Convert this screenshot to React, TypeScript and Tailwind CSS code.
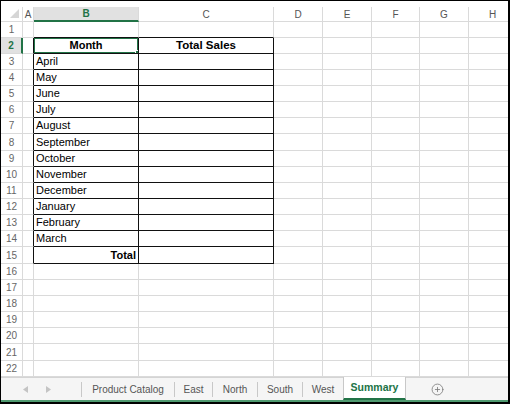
import React from 'react';
import { CirclePlus } from 'lucide-react';

const COLUMNS = ['A', 'B', 'C', 'D', 'E', 'F', 'G', 'H'];
const MONTHS = [
  'April', 'May', 'June', 'July', 'August', 'September',
  'October', 'November', 'December', 'January', 'February', 'March',
];
const SHEETS = [
  { name: 'Product Catalog', w: 'w-[92px]' },
  { name: 'East', w: 'w-[37px]' },
  { name: 'North', w: 'w-[44px]' },
  { name: 'South', w: 'w-[44px]' },
  { name: 'West', w: 'w-[40px]' },
];

// shared column template: row header, A..H
const ROW_GRID = 'grid grid-cols-[22px_11px_105px_135px_49px_49px_48px_49px_48px] w-max';
const CELL = 'border-r border-b border-[#dadada] flex items-center overflow-hidden whitespace-nowrap';
const INK = 'border-r-[#111111]';
const INK_B = 'border-b-[#111111]';

const ColumnHeaders: React.FC = () => (
  <div className={`${ROW_GRID} h-[15px]`}>
    <div className={`${CELL} relative`}>
      <svg className="absolute right-[3px] bottom-[3px]" width="9" height="9" viewBox="0 0 9 9">
        <polygon points="9,0 9,9 0,9" fill="#d6d6d6" />
      </svg>
    </div>
    {COLUMNS.map((c) =>
      c === 'B' ? (
        <div key={c} className={`${CELL} justify-center bg-[#e1e1e1] border-b-2 border-b-[#217346] text-[10px] font-bold text-[#217346]`}>
          {c}
        </div>
      ) : (
        <div key={c} className={`${CELL} justify-center text-[10px] text-[#555]`}>
          {c}
        </div>
      )
    )}
  </div>
);

const SheetRow: React.FC<{ r: number }> = ({ r }) => {
  const inTable = r >= 2 && r <= 15;
  const tall = r === 8 || r === 15 || r === 21;
  const month = r >= 3 && r <= 14 ? MONTHS[r - 3] : null;

  return (
    <div className={`${ROW_GRID} ${tall ? 'h-[17px]' : 'h-4'}`}>
      {r === 2 ? (
        <div className={`${CELL} justify-center bg-[#e1e1e1] border-r-2 border-r-[#217346] text-[10px] font-bold text-[#217346]`}>
          {r}
        </div>
      ) : (
        <div className={`${CELL} justify-center text-[10px] text-[#666]`}>{r}</div>
      )}

      {/* A */}
      <div className={`${CELL} ${inTable ? INK : ''}`} />

      {/* B */}
      <div className={`${CELL} relative ${r === 1 ? INK_B : ''} ${inTable ? `${INK} ${INK_B}` : ''} text-[11px] text-black`}>
        {r === 2 && (
          <>
            <span className="w-full text-center font-bold">Month</span>
            <div className="absolute -left-px -top-px -right-px -bottom-px border-2 border-[#217346]">
              <div className="absolute -right-[4px] -bottom-[4px] w-[6px] h-[6px] bg-[#217346] border border-white" />
            </div>
          </>
        )}
        {month && <span className="pl-[2px]">{month}</span>}
        {r === 15 && <span className="w-full text-right pr-[2px] font-bold">Total</span>}
      </div>

      {/* C */}
      <div className={`${CELL} ${r === 1 ? INK_B : ''} ${inTable ? `${INK} ${INK_B}` : ''} text-[11px] text-black`}>
        {r === 2 && <span className="w-full text-center font-bold text-[11.5px]">Total Sales</span>}
      </div>

      {['D', 'E', 'F', 'G', 'H'].map((c) => (
        <div key={c} className={CELL} />
      ))}
    </div>
  );
};

const TabBar: React.FC = () => (
  <div className="h-[23px] flex items-stretch bg-[#f5f5f5] border-t border-[#d4d4d4] text-[10px] text-[#555]">
    <div className="w-[80px] flex items-center pl-[22px] gap-[18px]">
      <svg width="5" height="7" viewBox="0 0 5 7">
        <polygon points="5,0 5,7 0,3.5" fill="#c4c4c4" />
      </svg>
      <svg width="5" height="7" viewBox="0 0 5 7">
        <polygon points="0,0 0,7 5,3.5" fill="#c4c4c4" />
      </svg>
    </div>
    {SHEETS.map((s) => (
      <React.Fragment key={s.name}>
        <div className="flex items-center">
          <span className="w-px h-[15px] bg-[#c8c8c8]" />
        </div>
        <div className={`${s.w} flex items-center justify-center`}>{s.name}</div>
      </React.Fragment>
    ))}
    <div className="w-[63px] -mt-px flex items-center justify-center bg-white border-x border-[#c8c8c8] border-b-2 border-b-[#217346] font-bold text-[#217346] text-[10.5px]">
      Summary
    </div>
    <div className="flex items-center pl-[25px]">
      <CirclePlus size={13} strokeWidth={1.5} color="#7a7a7a" />
    </div>
  </div>
);

export default function App() {
  const rows = Array.from({ length: 22 }, (_, i) => i + 1);
  return (
    <div className="w-[510px] h-[404px] overflow-hidden bg-white border-t border-l border-r-2 border-b-2 border-black flex flex-col font-['Liberation_Sans',Arial,sans-serif]">
      <div className="h-[6px] shrink-0" />
      <ColumnHeaders />
      <div className="shrink-0">
        {rows.map((r) => (
          <SheetRow key={r} r={r} />
        ))}
      </div>
      <TabBar />
      <div className="h-[2px] bg-[#4f9a70] shrink-0" />
    </div>
  );
}
